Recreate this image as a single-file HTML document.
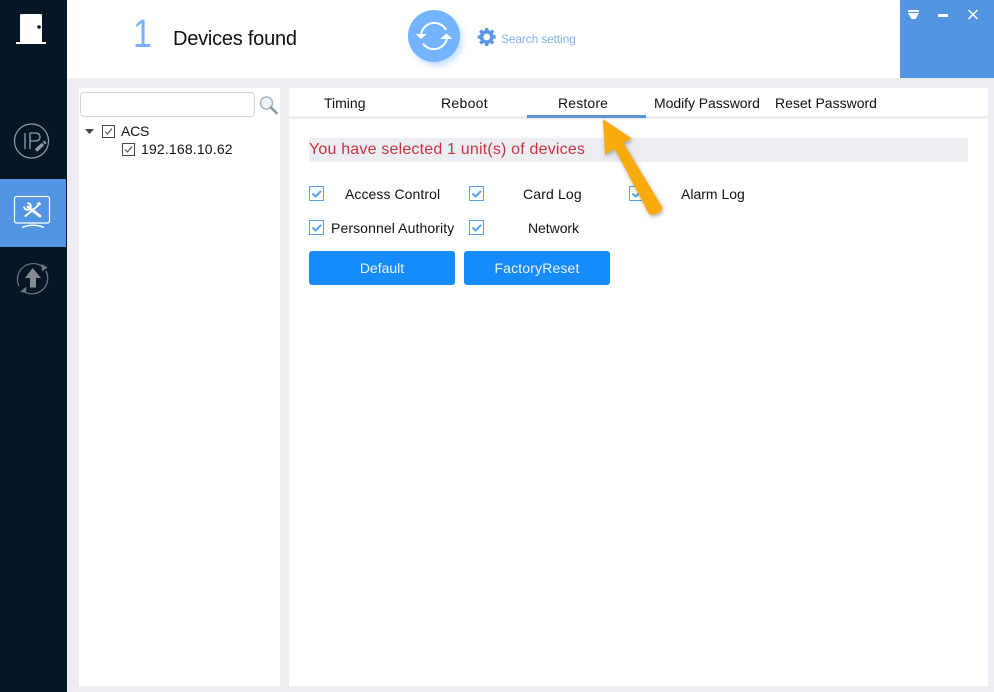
<!DOCTYPE html>
<html><head><meta charset="utf-8">
<style>
html,body{margin:0;padding:0}
body{width:994px;height:692px;position:relative;overflow:hidden;background:#ecedf3;font-family:"Liberation Sans",Arial,sans-serif;font-size:14px;color:#111}
.a{position:absolute}
.t{position:absolute;white-space:nowrap;line-height:16px}
.cb{position:absolute;width:13px;height:13px;border:1.500px solid #58a2ec;background:#fff}
.cb svg{position:absolute;left:-1px;top:-1px}
.tb{position:absolute;width:11px;height:11px;border:1px solid #444;background:#fff}
.tb svg{position:absolute;left:0;top:0}
.btn{position:absolute;height:34px;width:146px;top:251px;background:#168bfb;border-radius:3px;color:#e8f3ff;text-align:center;line-height:34px}
</style></head><body>
<div class="a" style="left:0;top:0;width:67px;height:692px;background:#051727"></div>
<div class="a" style="left:0;top:179px;width:66px;height:68px;background:#5295e3"></div>
<div class="a" style="left:67px;top:0;width:927px;height:78px;background:#fff"></div>
<div class="a" style="left:900px;top:0;width:94px;height:78px;background:#5295e3"></div>
<div class="a" style="left:79px;top:88px;width:201px;height:598px;background:#fff"></div>
<div class="a" style="left:289px;top:88px;width:699px;height:598px;background:#fff"></div>

<!-- door -->
<svg class="a" style="left:0;top:0" width="67" height="60"><path d="M20 42V15.500Q20 14 21.500 14H40.500Q42 14 42 15.500V42Z" fill="#fff"/><rect x="16" y="42" width="30" height="2" fill="#fff"/><circle cx="39" cy="27" r="1.800" fill="#051727"/></svg>
<!-- IP -->
<svg class="a" style="left:0;top:110px" width="67" height="60" fill="none" stroke="#969ca3"><circle cx="31.500" cy="31" r="17" stroke-width="1.200"/><path d="M25 23V39" stroke-width="1.300"/><path d="M30 39V23H34.500Q40 23 40 27Q40 31 34.500 31H30" stroke-width="1.300"/><path d="M36 40.500L43 34" stroke-width="3.400"/><path d="M44 33.200L45.500 31.800" stroke-width="3.400"/></svg>
<!-- tools -->
<svg class="a" style="left:0;top:179px" width="66" height="68" fill="none" stroke="#fff"><rect x="14.500" y="17.500" width="35" height="26.500" rx="2" stroke-width="1.200"/><path d="M22 48.500Q33 44 44 48.500" stroke-width="1.400"/><path d="M28 28L40 37" stroke-width="2.800" stroke-linecap="round"/><path d="M27.500 24A3.400 3.400 0 1 1 24 27.500" stroke-width="1.900"/><path d="M37.500 27L25.500 37" stroke-width="2" stroke-linecap="round"/><path d="M37.500 26L40.500 24" stroke-width="3"/></svg>
<!-- upload -->
<svg class="a" style="left:0;top:250px" width="67" height="60" fill="none" stroke="#71777e"><path d="M19 36A15.700 15.700 0 0 1 43 17" stroke-width="1.200"/><path d="M46 21A15.700 15.700 0 0 1 23 41" stroke-width="1.200"/><path d="M41.500 14L47.500 17.500L42 21.500Z" fill="#71777e" stroke="none"/><path d="M26.500 36.500L26 42.500L20 42Z" fill="#71777e" stroke="none"/><path d="M32.700 18L41 28H36V37.500H30V28H25Z" fill="#868b92" stroke="none"/></svg>

<!-- header -->
<div class="t" style="left:133px;top:14px;font-size:40px;line-height:40px;color:#74b3ff;transform:scaleX(.85);transform-origin:left top">1</div>
<div class="t" style="left:173px;top:28px;font-size:20px;line-height:22px;color:#111;letter-spacing:-.23px">Devices found</div>
<div class="a" style="left:408px;top:10px;width:52px;height:52px;border-radius:50%;background:#74b3ff;box-shadow:3px 4px 6px rgba(116,179,255,.4)"></div>
<svg class="a" style="left:408px;top:10px" width="52" height="52" fill="none" stroke="#fff" stroke-width="2"><path d="M13 25A13.300 13.300 0 0 1 38 20"/><path d="M39 28A13.300 13.300 0 0 1 15 33.500"/><path d="M7.700 24H18.700L13 29Z" fill="#fff" stroke="none"/><path d="M32 29H44.300L38.700 23.500Z" fill="#fff" stroke="none"/></svg>
<svg class="a" style="left:477px;top:27px" width="20" height="20"><path d="M9.700 1V19M.7 10H18.700M3.300 3.600L16.100 16.400M16.100 3.600L3.300 16.400" stroke="#5a96e2" stroke-width="3.400" fill="none"/><circle cx="9.700" cy="10" r="7" fill="#5a96e2"/><circle cx="9.700" cy="10" r="3.400" fill="#fff"/></svg>
<div class="t" style="left:501px;top:31px;font-size:12px;color:#7fb0ee;letter-spacing:-.15px">Search setting</div>
<!-- window buttons -->
<svg class="a" style="left:900px;top:0" width="94" height="30" fill="#fff"><rect x="8" y="10" width="11" height="2"/><path d="M8 13H19L15.500 19H11.500Z"/><rect x="38" y="14" width="10" height="3"/><path d="M68.500 10L77.500 19M77.500 10L68.500 19" stroke="#fff" stroke-width="1.500"/></svg>

<!-- left tree -->
<div class="a" style="left:80px;top:92px;width:173px;height:23px;border:1px solid #d4d6dc;border-radius:4px;background:#fff"></div>
<svg class="a" style="left:258px;top:96px" width="20" height="20"><circle cx="8.500" cy="7" r="6" fill="#eef4f8" stroke="#a9b6c0" stroke-width="1.500"/><path d="M13 11.500L18.500 17" stroke="#8d979f" stroke-width="2.600" stroke-linecap="round"/></svg>
<svg class="a" style="left:85px;top:128px" width="10" height="8"><path d="M0 1H9L4.500 6Z" fill="#444"/></svg>
<div class="tb" style="left:102px;top:125px"><svg width="11" height="11" fill="none"><path d="M2 5.500L4.500 8L9 2.500" stroke="#555" stroke-width="1.100"/></svg></div>
<div class="t" style="left:121px;top:123px;letter-spacing:-.2px">ACS</div>
<div class="tb" style="left:122px;top:143px"><svg width="11" height="11" fill="none"><path d="M2 5.500L4.500 8L9 2.500" stroke="#555" stroke-width="1.100"/></svg></div>
<div class="t" style="left:141px;top:141px;letter-spacing:.17px">192.168.10.62</div>

<!-- tabs -->
<div class="a" style="left:289px;top:116px;width:699px;height:3px;background:#ecedf3"></div>
<div class="a" style="left:527px;top:115px;width:119px;height:3px;background:#5a93d8"></div>
<div class="t" style="left:324px;top:95px">Timing</div>
<div class="t" style="left:441px;top:95px;letter-spacing:.3px">Reboot</div>
<div class="t" style="left:558px;top:95px;letter-spacing:.15px">Restore</div>
<div class="t" style="left:654px;top:95px;letter-spacing:-.05px">Modify Password</div>
<div class="t" style="left:775px;top:95px">Reset Password</div>

<!-- notice -->
<div class="a" style="left:309px;top:138px;width:659px;height:24px;background:#ecedf3"></div>
<div class="t" style="left:309px;top:141px;font-size:16px;line-height:18px;color:#c9333f;letter-spacing:.19px">You have selected 1 unit(s) of devices</div>

<!-- checkboxes -->
<div class="cb" style="left:309px;top:186px"><svg width="16" height="16" fill="none"><path d="M3.500 7.500L6.700 10.500L12 5" stroke="#58a2ec" stroke-width="2"/></svg></div>
<div class="cb" style="left:469px;top:186px"><svg width="16" height="16" fill="none"><path d="M3.500 7.500L6.700 10.500L12 5" stroke="#58a2ec" stroke-width="2"/></svg></div>
<div class="cb" style="left:629px;top:186px"><svg width="16" height="16" fill="none"><path d="M3.500 7.500L6.700 10.500L12 5" stroke="#58a2ec" stroke-width="2"/></svg></div>
<div class="cb" style="left:309px;top:220px"><svg width="16" height="16" fill="none"><path d="M3.500 7.500L6.700 10.500L12 5" stroke="#58a2ec" stroke-width="2"/></svg></div>
<div class="cb" style="left:469px;top:220px"><svg width="16" height="16" fill="none"><path d="M3.500 7.500L6.700 10.500L12 5" stroke="#58a2ec" stroke-width="2"/></svg></div>
<div class="t" style="left:345px;top:186px;letter-spacing:.07px">Access Control</div>
<div class="t" style="left:523px;top:186px;letter-spacing:.15px">Card Log</div>
<div class="t" style="left:681px;top:186px">Alarm Log</div>
<div class="t" style="left:331px;top:220px;letter-spacing:.1px">Personnel Authority</div>
<div class="t" style="left:528px;top:220px;letter-spacing:-.05px">Network</div>
<div class="btn" style="left:309px">Default</div>
<div class="btn" style="left:464px;letter-spacing:.15px">FactoryReset</div>

<!-- arrow -->
<svg class="a" style="left:590px;top:110px;filter:drop-shadow(1px 2px 2px rgba(0,0,0,.3))" width="90" height="120"><path d="M13.500 10L41 28.500L33 33L71 96Q73 100 69 102L64 104Q60 105 58 101L25 38L15.500 44Z" fill="#f9ab0e" stroke="#f9ab0e" stroke-linejoin="round"/></svg>
</body></html>
